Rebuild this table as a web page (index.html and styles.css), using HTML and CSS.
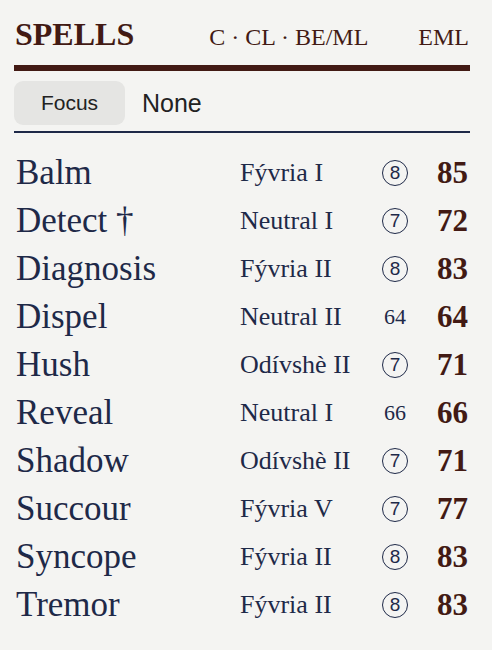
FILE: index.html
```html
<!DOCTYPE html>
<html>
<head>
<meta charset="utf-8">
<link rel="stylesheet" href="styles.css">
</head>
<body>
<div class="panel">
  <div class="head">
    <span class="title">SPELLS</span>
    <span class="cols">C · CL · BE/ML</span>
    <span class="eml-h">EML</span>
  </div>
  <div class="focus">
    <span class="focus-btn">Focus</span>
    <span class="focus-val">None</span>
  </div>
  <div class="list">
    <div class="row"><span class="name">Balm</span><span class="school">Fývria I</span><span class="cl"><span class="circ">8</span></span><span class="eml">85</span></div>
    <div class="row"><span class="name">Detect †</span><span class="school">Neutral I</span><span class="cl"><span class="circ">7</span></span><span class="eml">72</span></div>
    <div class="row"><span class="name">Diagnosis</span><span class="school">Fývria II</span><span class="cl"><span class="circ">8</span></span><span class="eml">83</span></div>
    <div class="row"><span class="name">Dispel</span><span class="school">Neutral II</span><span class="cl"><span class="num">64</span></span><span class="eml">64</span></div>
    <div class="row"><span class="name">Hush</span><span class="school">Odívshè II</span><span class="cl"><span class="circ">7</span></span><span class="eml">71</span></div>
    <div class="row"><span class="name">Reveal</span><span class="school">Neutral I</span><span class="cl"><span class="num">66</span></span><span class="eml">66</span></div>
    <div class="row"><span class="name">Shadow</span><span class="school">Odívshè II</span><span class="cl"><span class="circ">7</span></span><span class="eml">71</span></div>
    <div class="row"><span class="name">Succour</span><span class="school">Fývria V</span><span class="cl"><span class="circ">7</span></span><span class="eml">77</span></div>
    <div class="row"><span class="name">Syncope</span><span class="school">Fývria II</span><span class="cl"><span class="circ">8</span></span><span class="eml">83</span></div>
    <div class="row"><span class="name">Tremor</span><span class="school">Fývria II</span><span class="cl"><span class="circ">8</span></span><span class="eml">83</span></div>
  </div>
</div>
</body>
</html>
```
FILE: styles.css
```css
html, body {
  margin: 0;
  padding: 0;
  background: #f4f4f2;
}
.panel {
  padding: 14px 22px 0 14px;
  font-family: "Liberation Serif", serif;
  color: #1e2948;
}
.head {
  display: flex;
  align-items: baseline;
  height: 57px;
  box-sizing: border-box;
  padding: 0 1px 7px;
  border-bottom: 6px solid #421a14;
  color: #421a14;
}
.title {
  font-size: 32px;
  font-weight: bold;
  line-height: 40px;
}
.cols {
  font-size: 24px;
  margin-left: auto;
  margin-right: 50px;
}
.eml-h {
  font-size: 24px;
}
.focus {
  display: flex;
  align-items: center;
  height: 62px;
  box-sizing: border-box;
  padding-top: 4px;
  border-bottom: 2px solid #1e2948;
  font-family: "Liberation Sans", Arial, sans-serif;
  color: #222;
}
.focus-btn {
  width: 111px;
  height: 44px;
  background: #e5e5e3;
  border-radius: 9px;
  display: flex;
  align-items: center;
  justify-content: center;
  font-size: 21px;
}
.focus-val {
  margin-left: 17px;
  font-size: 25px;
}
.list {
  padding-top: 16px;
}
.row {
  display: grid;
  grid-template-columns: 226px 140px 30px 1fr;
  align-items: center;
  height: 48px;
}
.name {
  font-size: 35px;
  padding-left: 2px;
}
.school {
  font-size: 26px;
}
.cl {
  display: flex;
  justify-content: center;
  font-size: 22px;
}
.circ {
  width: 24px;
  height: 24px;
  border: 1.6px solid #1e2948;
  border-radius: 50%;
  display: flex;
  align-items: center;
  justify-content: center;
  font-family: "Liberation Sans", Arial, sans-serif;
  font-size: 19px;
}
.eml {
  text-align: right;
  font-size: 31px;
  font-weight: bold;
  color: #421a14;
  padding-right: 2px;
}
```
